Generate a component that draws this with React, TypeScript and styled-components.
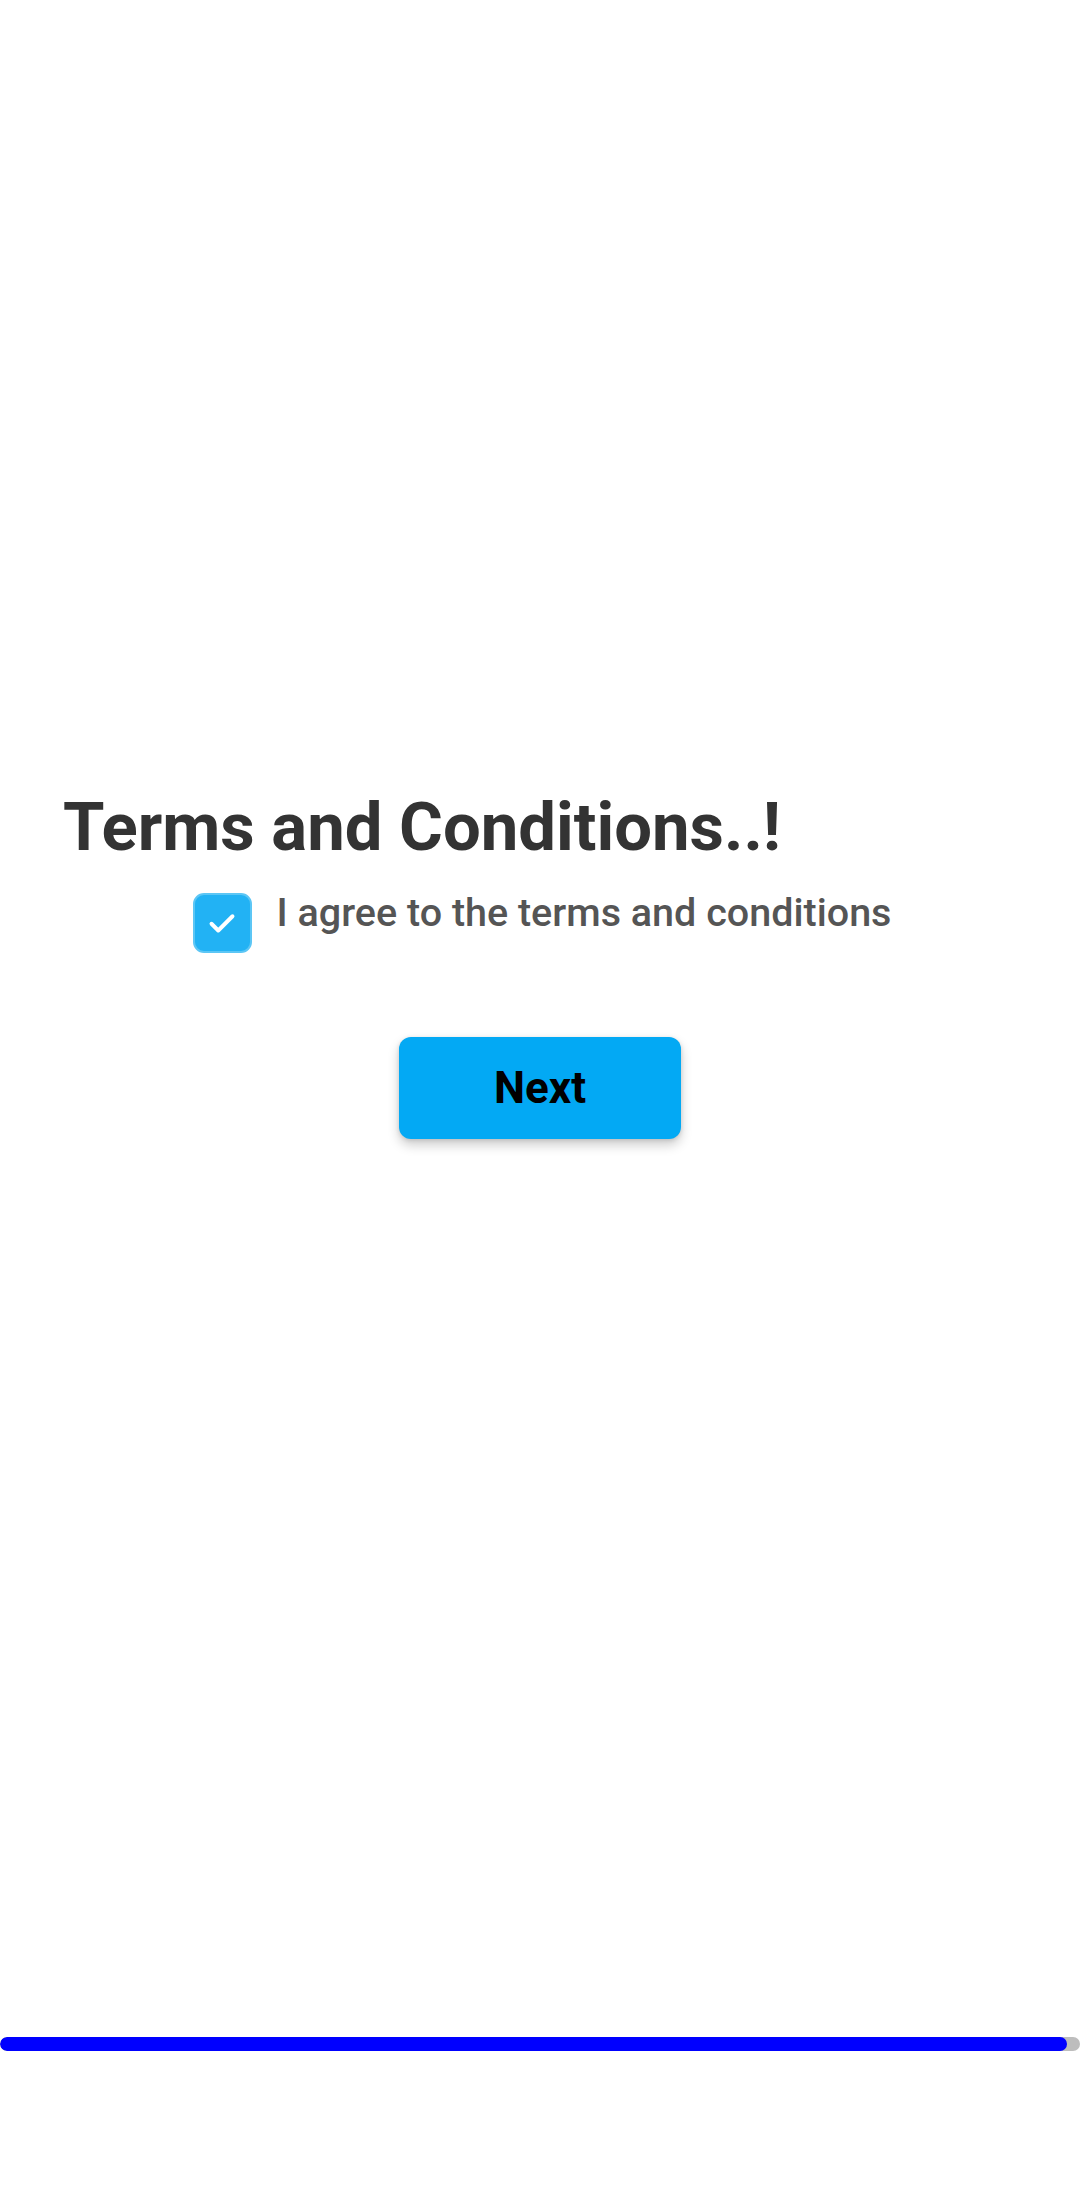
import React, { useState } from "react";
import styled, { createGlobalStyle } from "styled-components";

const GlobalStyle = createGlobalStyle`
  html, body {
    margin: 0;
    padding: 0;
    background: #ffffff;
  }
  body {
    font-family: Roboto, "Noto Sans", "Liberation Sans", sans-serif;
  }
`;

const Page = styled.div`
  width: 1080px;
  height: 2208px;
  display: flex;
  flex-direction: column;
  background: #ffffff;
  box-sizing: border-box;
  padding-top: 787px;
  overflow: hidden;
`;

const Title = styled.h1`
  margin: 0;
  padding: 0 0 0 63px;
  font-family: Roboto, "Liberation Sans", sans-serif;
  font-size: 67px;
  line-height: 80px;
  font-weight: 700;
  color: #333333;
`;

const AgreeRow = styled.label`
  margin-top: 23px;
  display: flex;
  flex-direction: row;
  justify-content: center;
  align-items: flex-start;
  gap: 25px;
  padding-left: 4px;
  cursor: pointer;
`;

const Box = styled.span<{ $checked: boolean }>`
  margin-top: 3px;
  width: 59px;
  height: 60px;
  box-sizing: border-box;
  border-radius: 11px;
  border: 2px solid ${(p) => (p.$checked ? "#5cc6f5" : "#9e9e9e")};
  background: ${(p) => (p.$checked ? "#22b2f4" : "#ffffff")};
  display: flex;
  align-items: center;
  justify-content: center;
  flex-shrink: 0;
`;

const Label = styled.span`
  font-family: Roboto, "Liberation Sans", sans-serif;
  font-size: 39.5px;
  line-height: 46px;
  font-weight: 500;
  color: #555555;
`;

const NextButton = styled.button`
  margin: 84px auto 0;
  width: 282px;
  height: 102px;
  border: none;
  border-radius: 12px;
  background: #03a9f4;
  box-shadow: 0 6px 12px rgba(0, 0, 0, 0.2), 0 1px 4px rgba(0, 0, 0, 0.12);
  font-family: Roboto, "Liberation Sans", sans-serif;
  font-size: 44px;
  font-weight: 700;
  color: #000000;
  display: flex;
  align-items: center;
  justify-content: center;
  padding: 0;
  cursor: pointer;
`;

const Spacer = styled.div`
  flex: 1;
`;

const Track = styled.div`
  margin-bottom: 157px;
  width: 1080px;
  height: 14px;
  border-radius: 7px;
  background: #bdbdbd;
  overflow: hidden;
  display: flex;
`;

const Fill = styled.div`
  height: 100%;
  border-radius: 7px;
  background: #0000ff;
`;

export default function App() {
  const [checked, setChecked] = useState(true);
  const progress = 1067 / 1080;
  return (
    <>
      <GlobalStyle />
      <Page>
        <Title>Terms and Conditions..!</Title>
        <AgreeRow onClick={() => setChecked((c) => !c)}>
          <Box $checked={checked}>
            {checked && (
              <svg width="36" height="36" viewBox="0 0 24 24" fill="none">
                <path
                  d="M5 12.5l4.5 4.5L19 7.5"
                  stroke="#ffffff"
                  strokeWidth="2.6"
                  strokeLinecap="round"
                  strokeLinejoin="round"
                />
              </svg>
            )}
          </Box>
          <Label>I agree to the terms and conditions</Label>
        </AgreeRow>
        <NextButton>Next</NextButton>
        <Spacer />
        <Track>
          <Fill style={{ width: `${progress * 100}%` }} />
        </Track>
      </Page>
    </>
  );
}
